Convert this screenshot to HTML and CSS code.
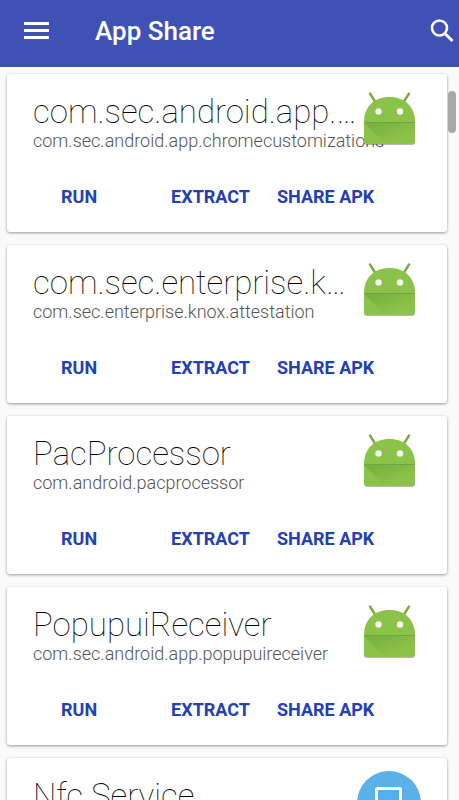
FILE: index.html
```html
<!DOCTYPE html>
<html lang="en">
<head>
  <meta charset="UTF-8">
  <meta name="viewport" content="width=device-width, initial-scale=1.0">
  <title>App Share</title>
  <link rel="stylesheet" href="styles.css">
</head>
<body>
  <!-- Shared launcher icon -->
  <svg class="sprite" aria-hidden="true">
    <linearGradient id="fold" x1="0" y1="0" x2="1" y2="1">
      <stop offset="0" stop-color="#33691e" stop-opacity=".24" />
      <stop offset=".75" stop-color="#33691e" stop-opacity="0" />
    </linearGradient>
    <symbol id="android" viewBox="0 0 56 56">
      <path d="M3 50h51v1q0 3-3 3H6q-3 0-3-3z" fill="#000" opacity=".28" />
      <path d="M9 2.500l5 8M48 2.500l-5 8" stroke="#7aad42" stroke-width="2.400" stroke-linecap="round" />
      <path d="M3 31C3 16 13 6 28.500 6S54 16 54 31v19q0 3-3 3H6q-3 0-3-3z" fill="#8bc34a" />
      <path d="M3 32h51v18q0 3-3 3H24z" fill="url(#fold)" />
      <path d="M3 31h51v1H3z" fill="#689f38" opacity=".8" />
      <circle cx="17.500" cy="20.500" r="3.200" fill="#f5f5f5" />
      <circle cx="39" cy="20.500" r="3.200" fill="#f5f5f5" />
    </symbol>
  </svg>

  <header class="toolbar">
    <button type="button" class="icon-btn" aria-label="Open menu">
      <svg class="menu-icon" viewBox="0 0 26 20" fill="#fff">
        <path d="M0 1h25v3H0zM0 8h25v3H0zM0 15h25v3H0z" />
      </svg>
    </button>
    <h1 class="toolbar-title">App Share</h1>
    <button type="button" class="icon-btn" aria-label="Search">
      <svg class="search-icon" viewBox="0 0 24 24" fill="none" stroke="#fff">
        <circle cx="9.500" cy="9" r="7.500" stroke-width="2.600" />
        <path d="M15 14.500l7.500 7.500" stroke-width="3" />
      </svg>
    </button>
  </header>

  <main class="app-list">
    <article class="card">
      <h2 class="app-name">com.sec.android.app.chromecustomizations</h2>
      <p class="package">com.sec.android.app.chromecustomizations</p>
      <svg class="app-icon" aria-hidden="true"><use href="#android" /></svg>
      <div class="actions">
        <button type="button" class="btn btn-run">RUN</button>
        <button type="button" class="btn">EXTRACT</button>
        <button type="button" class="btn">SHARE APK</button>
      </div>
    </article>

    <article class="card">
      <h2 class="app-name">com.sec.enterprise.knox.attestation</h2>
      <p class="package">com.sec.enterprise.knox.attestation</p>
      <svg class="app-icon" aria-hidden="true"><use href="#android" /></svg>
      <div class="actions">
        <button type="button" class="btn btn-run">RUN</button>
        <button type="button" class="btn">EXTRACT</button>
        <button type="button" class="btn">SHARE APK</button>
      </div>
    </article>

    <article class="card">
      <h2 class="app-name">PacProcessor</h2>
      <p class="package">com.android.pacprocessor</p>
      <svg class="app-icon" aria-hidden="true"><use href="#android" /></svg>
      <div class="actions">
        <button type="button" class="btn btn-run">RUN</button>
        <button type="button" class="btn">EXTRACT</button>
        <button type="button" class="btn">SHARE APK</button>
      </div>
    </article>

    <article class="card">
      <h2 class="app-name">PopupuiReceiver</h2>
      <p class="package">com.sec.android.app.popupuireceiver</p>
      <svg class="app-icon" aria-hidden="true"><use href="#android" /></svg>
      <div class="actions">
        <button type="button" class="btn btn-run">RUN</button>
        <button type="button" class="btn">EXTRACT</button>
        <button type="button" class="btn">SHARE APK</button>
      </div>
    </article>

    <article class="card">
      <h2 class="app-name">Nfc Service</h2>
      <p class="package">com.android.nfc</p>
      <svg class="app-icon app-icon-round" viewBox="0 0 64 64" aria-hidden="true">
        <circle cx="32" cy="32" r="32" fill="#5ab2e8" />
        <rect x="19.500" y="17.500" width="24" height="32" rx="1" fill="#53b0ea" stroke="#fff" stroke-width="3" />
      </svg>
      <div class="actions">
        <button type="button" class="btn btn-run">RUN</button>
        <button type="button" class="btn">EXTRACT</button>
        <button type="button" class="btn">SHARE APK</button>
      </div>
    </article>
  </main>

  <div class="scroll-thumb"></div>
</body>
</html>
```
FILE: styles.css
```css
:root {
  --primary-color: #3f51b5;
  --action-color: #2340b5;
  --bg-color: #fafafa;
  --card-color: #fff;
}

* {
  margin: 0;
  padding: 0;
  box-sizing: border-box;
}

body {
  font-family: Roboto, "Liberation Sans", sans-serif;
  background-color: var(--bg-color);
  color: #000;
  height: 100vh;
  display: flex;
  flex-direction: column;
  overflow: hidden;
}

button {
  font: inherit;
  border: none;
  background: none;
  cursor: pointer;
}

.sprite {
  position: absolute;
  width: 0;
  height: 0;
}

/* Toolbar */
.toolbar {
  display: flex;
  align-items: center;
  flex-shrink: 0;
  height: 67px;
  padding: 0 5px 5px 24px;
  background-color: var(--primary-color);
  color: #fff;
}

.icon-btn {
  display: flex;
}

.menu-icon {
  width: 26px;
  height: 20px;
}

.toolbar-title {
  flex: 1;
  margin-left: 45px;
  font-size: 26px;
  line-height: 32px;
  font-weight: 500;
}

.search-icon {
  width: 24px;
  height: 24px;
}

/* App list */
.app-list {
  flex: 1;
  display: flex;
  flex-direction: column;
  gap: 13px;
  padding: 7px 12px 7px 7px;
  overflow: hidden;
}

.card {
  position: relative;
  flex-shrink: 0;
  padding: 18px 26px;
  background-color: var(--card-color);
  border-radius: 3px;
  box-shadow: 0 1px 3px rgba(0, 0, 0, 0.4);
}

.app-name {
  margin-right: 64px;
  font-size: 33px;
  line-height: 40px;
  font-weight: 100;
  white-space: nowrap;
  overflow: hidden;
  text-overflow: ellipsis;
}

.package {
  color: #555;
  font-size: 18px;
  line-height: 18px;
  font-weight: 300;
  white-space: nowrap;
}

.app-icon {
  position: absolute;
  top: 17px;
  right: 30px;
  width: 56px;
  height: 56px;
}

.app-icon-round {
  top: 13px;
  right: 26px;
  width: 64px;
  height: 64px;
}

.actions {
  display: flex;
  gap: 27px;
  margin-top: 30px;
}

.btn {
  color: var(--action-color);
  font-size: 18px;
  line-height: 34px;
  font-weight: 700;
}

.btn-run {
  margin-left: 28px;
  margin-right: 47px;
}

/* Scroll position */
.scroll-thumb {
  position: absolute;
  top: 91px;
  right: 3px;
  width: 8px;
  height: 42px;
  border-radius: 4px;
  background-color: #a8a8a8;
}
```
